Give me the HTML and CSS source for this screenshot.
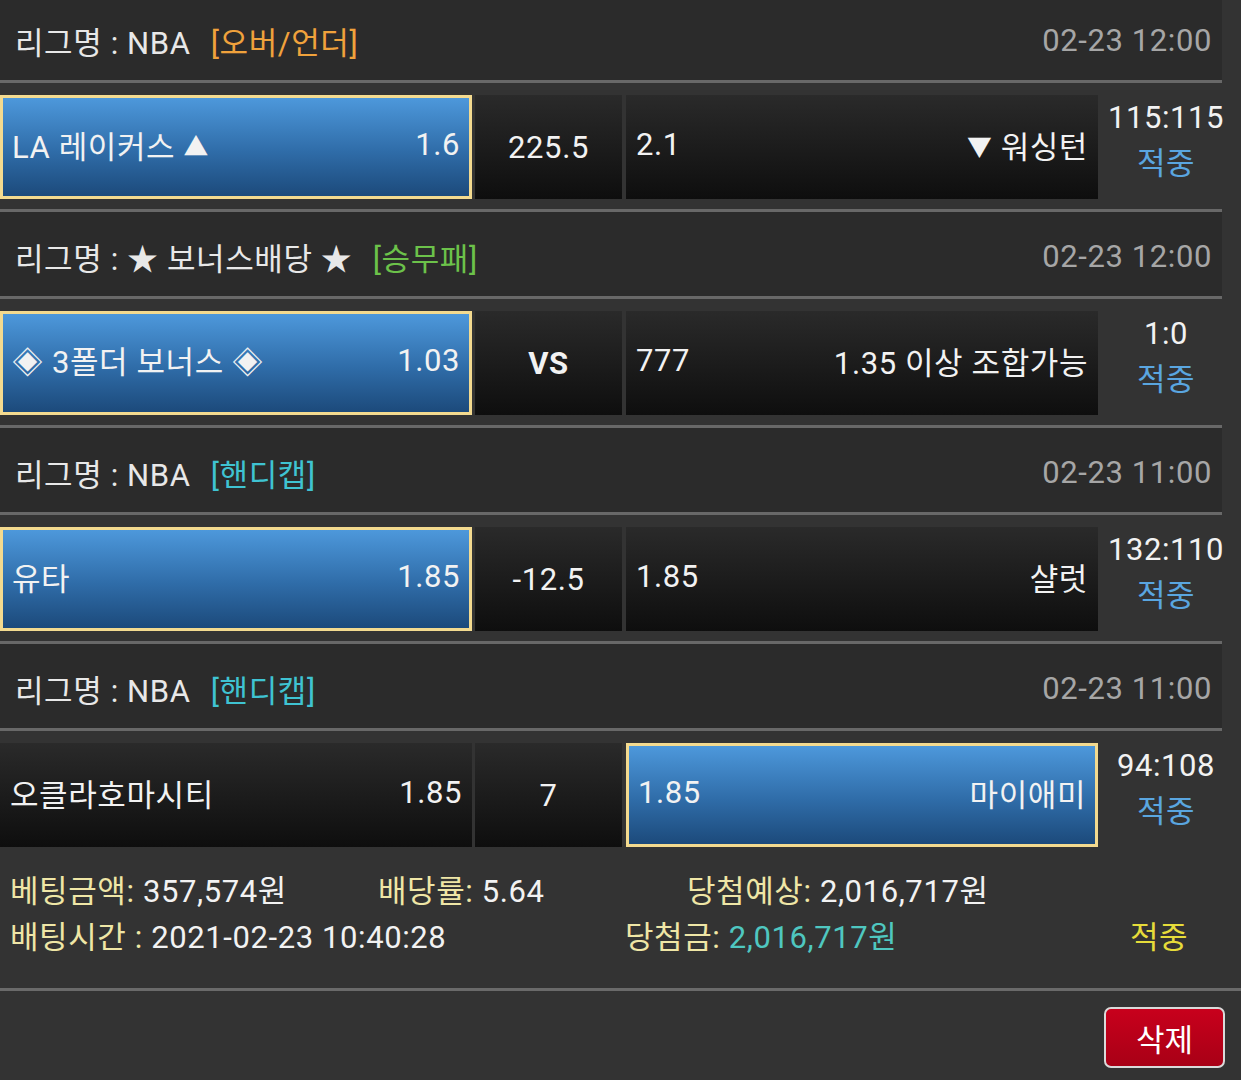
FILE: index.html
```html
<!DOCTYPE html>
<html lang="ko">
<head>
    <meta charset="UTF-8">
    <meta name="viewport" content="width=device-width, initial-scale=1.0">
    <title>베팅내역</title>
    <link rel="stylesheet" href="styles.css">
</head>
<body>
    <div class="slip">
        <div class="game">
            <div class="game-head">
                <span class="league">리그명 : NBA <em class="type ou">[오버/언더]</em></span>
                <span class="time">02-23 12:00</span>
            </div>
            <div class="game-row">
                <div class="pick side on"><span>LA 레이커스 <i class="arrow">▲</i></span><span>1.6</span></div>
                <div class="pick mid">225.5</div>
                <div class="pick side"><span>2.1</span><span><i class="arrow">▼</i> 워싱턴</span></div>
                <div class="score"><span>115:115</span><span class="result">적중</span></div>
            </div>
        </div>

        <div class="game">
            <div class="game-head">
                <span class="league">리그명 : ★ 보너스배당 ★ <em class="type wdl">[승무패]</em></span>
                <span class="time">02-23 12:00</span>
            </div>
            <div class="game-row">
                <div class="pick side on"><span>◈ 3폴더 보너스 ◈</span><span>1.03</span></div>
                <div class="pick mid vs">VS</div>
                <div class="pick side"><span>777</span><span>1.35 이상 조합가능</span></div>
                <div class="score"><span>1:0</span><span class="result">적중</span></div>
            </div>
        </div>

        <div class="game">
            <div class="game-head">
                <span class="league">리그명 : NBA <em class="type hc">[핸디캡]</em></span>
                <span class="time">02-23 11:00</span>
            </div>
            <div class="game-row">
                <div class="pick side on"><span>유타</span><span>1.85</span></div>
                <div class="pick mid">-12.5</div>
                <div class="pick side"><span>1.85</span><span>샬럿</span></div>
                <div class="score"><span>132:110</span><span class="result">적중</span></div>
            </div>
        </div>

        <div class="game">
            <div class="game-head">
                <span class="league">리그명 : NBA <em class="type hc">[핸디캡]</em></span>
                <span class="time">02-23 11:00</span>
            </div>
            <div class="game-row">
                <div class="pick side"><span>오클라호마시티</span><span>1.85</span></div>
                <div class="pick mid">7</div>
                <div class="pick side on"><span>1.85</span><span>마이애미</span></div>
                <div class="score"><span>94:108</span><span class="result">적중</span></div>
            </div>
        </div>
    </div>

    <div class="summary">
        <div class="sum-line first">
            <span class="c1"><label>베팅금액:</label> 357,574원</span>
            <span class="c2"><label>배당률:</label> 5.64</span>
            <span class="c3"><label>당첨예상:</label> 2,016,717원</span>
        </div>
        <div class="sum-line">
            <span class="d1"><label>배팅시간 :</label> 2021-02-23 10:40:28</span>
            <span class="d2"><label>당첨금:</label> <b class="win">2,016,717원</b></span>
            <span class="d3">적중</span>
        </div>
    </div>

    <div class="actions">
        <button class="btn-del">삭제</button>
    </div>
</body>
</html>
```

FILE: styles.css
```css
html, body {
    margin: 0;
    padding: 0;
}

*, *::before, *::after {
    box-sizing: border-box;
}

body {
    background-color: #333;
    color: #f2f2f2;
    font-family: Roboto, "Noto Sans CJK KR", sans-serif;
    font-size: 31px;
    letter-spacing: 0.6px;
    width: 1241px;
    height: 1080px;
    overflow: hidden;
}

.slip {
    width: 1222px;
    margin-top: -4px;
}

.game + .game {
    border-top: 3px solid #686868;
}

.game-head {
    display: flex;
    justify-content: space-between;
    align-items: center;
    height: 87px;
    padding: 5px 10px 0 15px;
    background-color: #2b2b2b;
    border-bottom: 3px solid #686868;
    color: #e8e8e8;
}

.game-head .type {
    font-style: normal;
    margin-left: 12px;
}

.type.ou {
    color: #f0a23c;
}

.type.wdl {
    color: #6cc24a;
}

.type.hc {
    color: #3fc3d2;
}

.game-head .time {
    color: #a6a6a6;
}

.game-row {
    display: flex;
    height: 126px;
    padding: 12px 0 10px;
}

.pick {
    flex-shrink: 0;
    display: flex;
    align-items: center;
    height: 104px;
    padding-bottom: 6px;
    background: linear-gradient(#2a2a2a, #0e0e0e);
}

.pick.side {
    width: 472px;
    justify-content: space-between;
    padding: 0 10px 6px;
}

.pick.mid {
    width: 147px;
    margin: 0 4px 0 3px;
    justify-content: center;
    padding-bottom: 0;
}

.pick.vs {
    font-weight: bold;
}

.pick.on {
    background: linear-gradient(#4d98db, #2f6ca8 55%, #1c4a7b);
    border: 3px solid #f3da8f;
    padding: 0 9px 6px;
}

.arrow {
    font-style: normal;
    font-size: 0.8em;
    vertical-align: 2px;
}

.score {
    flex: 1;
    min-width: 0;
    display: flex;
    flex-direction: column;
    align-items: center;
    padding-left: 12px;
    line-height: 46px;
    white-space: nowrap;
}

.score .result {
    color: #5aa6e0;
}

.summary {
    padding: 12px 0 27px 10px;
    border-bottom: 3px solid #6a6a6a;
    line-height: 46px;
}

.sum-line {
    display: flex;
    white-space: nowrap;
}

.sum-line label {
    color: #efe6a6;
}

.c1 {
    width: 368px;
}

.c2 {
    width: 309px;
}

.d1 {
    width: 615px;
}

.d2 {
    flex: 1;
}

.d3 {
    width: 111px;
    color: #e6dc3a;
}

.win {
    font-weight: normal;
    color: #4fc7c0;
}

.actions {
    display: flex;
    justify-content: flex-end;
    padding: 16px 16px 0 0;
}

.btn-del {
    width: 121px;
    height: 61px;
    background: linear-gradient(#c8001c, #a80016);
    border: 2px solid #dadada;
    border-radius: 7px;
    color: #fff;
    font-family: Roboto, "Noto Sans CJK KR", sans-serif;
    font-size: 31px;
    cursor: pointer;
}
```
